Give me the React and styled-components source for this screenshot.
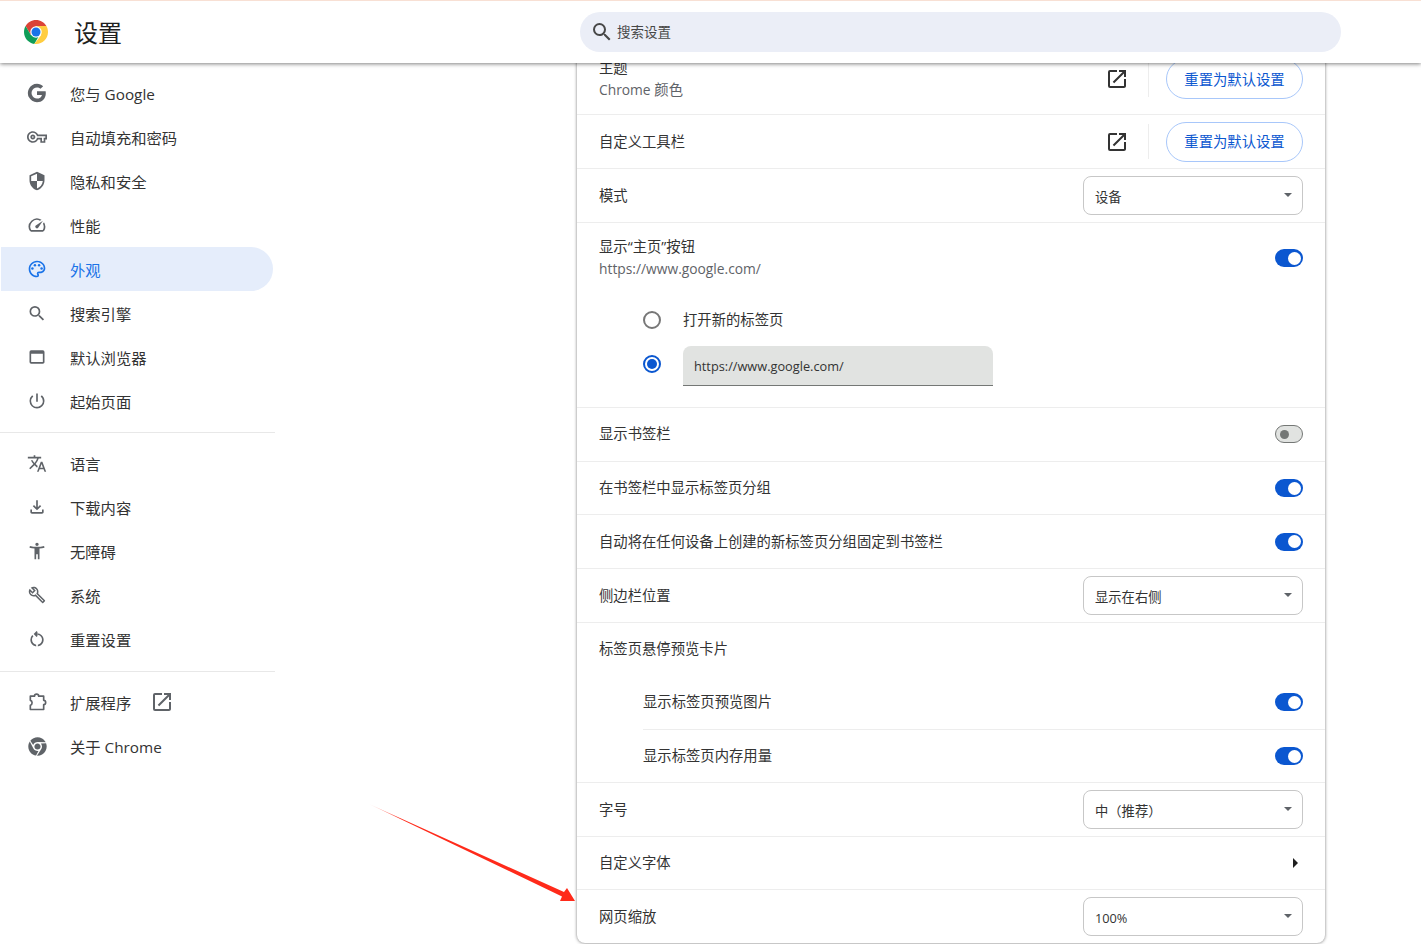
import React from "react";
import styled, { createGlobalStyle } from "styled-components";
import {
  MdOutlineVpnKey, MdSecurity, MdSpeed, MdOutlinePalette, MdSearch, MdWebAsset,
  MdOutlinePowerSettingsNew, MdTranslate, MdOutlineFileDownload, MdAccessibilityNew,
  MdOutlineBuild, MdOutlineRestartAlt, MdOutlineOpenInNew,
} from "react-icons/md";
import { FaChrome } from "react-icons/fa";

const Global = createGlobalStyle`
  html, body { margin: 0; padding: 0; background: #fff; overflow: hidden; }
  body { font-family: "Open Sans", "Noto Sans CJK SC", sans-serif; color: #1f1f1f; }
  * { box-sizing: border-box; }
`;

const Page = styled.div`
  position: relative;
  width: 1421px;
  height: 944px;
  overflow: hidden;
`;
const Header = styled.header`
  position: relative;
  z-index: 2;
  height: 63px;
  background: #fff;
  border-top: 1px solid #f8e0d4;
  box-shadow: 0 1px 4px rgba(0, 0, 0, 0.5);
  display: flex;
  align-items: center;
  padding-bottom: 1px;
`;
const Brand = styled.div`
  width: 580px;
  display: flex;
  align-items: center;
  padding-left: 24px;
  gap: 26px;
`;
const Title = styled.h1`
  margin: 2px 0 0;
  font-size: 24px;
  font-weight: 400;
  line-height: 32px;
  color: #1f1f1f;
`;
const SearchBox = styled.div`
  width: 761px;
  height: 40px;
  background: #ebeef7;
  border-radius: 20px;
  display: flex;
  align-items: center;
  padding-left: 10px;
  gap: 3px;
  font-size: 13.5px;
  color: #474747;
  svg { font-size: 24px; color: #474747; }
`;
const SearchText = styled.span`
  padding-bottom: 2px;
`;
const Body = styled.div`
  display: flex;
  align-items: flex-start;
`;
const Sidebar = styled.nav`
  width: 275px;
  padding-top: 8px;
  flex: none;
`;
const NavItem = styled.div`
  width: 272px;
  height: 44px;
  margin-left: 1px;
  padding-left: 26px;
  display: flex;
  align-items: center;
  gap: 23px;
  font-size: 15.3px;
  color: ${(p) => (p.$active ? "#1a73e8" : "#333")};
  background: ${(p) => (p.$active ? "#e5edfb" : "transparent")};
  border-radius: 0 22px 22px 0;
`;
const NavIcon = styled.span`
  width: 20px;
  height: 20px;
  display: flex;
  align-items: center;
  justify-content: center;
  font-size: ${(p) => p.$size || 20}px;
  color: ${(p) => (p.$active ? "#1a73e8" : "#5f6368")};
`;
const NavDivider = styled.hr`
  margin: ${(p) => p.$top || 9}px 0 8px;
  border: 0;
  border-top: 1px solid #e8e8e8;
`;
const NavExternal = styled.span`
  margin-left: -4px;
  display: flex;
  font-size: 24px;
  color: #5f6368;
`;
const Main = styled.main`
  padding-left: 302px;
  margin-top: -19px;
`;
const Card = styled.section`
  width: 748px;
  height: 899px;
  background: #fff;
  border-radius: 8px;
  box-shadow: 0 0 3px rgba(0, 0, 0, 0.45), 0 1px 4px rgba(0, 0, 0, 0.12);
  font-size: 14.33px;
  color: #333;
`;
const Row = styled.div`
  height: ${(p) => p.$h || 54}px;
  padding: 0 22px ${(p) => (p.$lift ? "1px" : "0")} ${(p) => p.$indent || 22}px;
  display: flex;
  align-items: center;
  justify-content: space-between;
  border-bottom: 1px solid ${(p) => (p.$plain ? "transparent" : "#ededed")};
`;
const SubRow = styled(Row)`
  margin-left: 66px;
  padding-left: 0;
`;
const HomeBlock = styled.div`
  height: 185px;
  border-bottom: 1px solid #ededed;
`;
const HomeHead = styled.div`
  height: 75px;
  padding: 14px 22px 0;
  display: flex;
  justify-content: space-between;
  align-items: flex-start;
`;
const Texts = styled.div`
  display: flex;
  flex-direction: column;
  gap: 2px;
`;
const Label = styled.div`
  line-height: 20px;
`;
const Sub = styled.div`
  line-height: 20px;
  color: #5f6368;
`;
const Latin = styled.span`
  font-size: ${(p) => p.$size || 13.8}px;
`;
const RadioRow = styled.div`
  height: 44px;
  padding-left: 66px;
  display: flex;
  align-items: center;
  gap: 22px;
`;
const Radio = styled.span`
  width: 18px;
  height: 18px;
  border-radius: 50%;
  flex: none;
  border: 2px solid ${(p) => (p.$on ? "#0b57d0" : "#777")};
  display: flex;
  align-items: center;
  justify-content: center;
  &::after {
    content: "";
    width: 10px;
    height: 10px;
    border-radius: 50%;
    background: ${(p) => (p.$on ? "#0b57d0" : "transparent")};
  }
`;
const UrlInput = styled.div`
  width: 310px;
  height: 40px;
  margin-top: 4px;
  padding: 1px 11px 0;
  display: flex;
  align-items: center;
  background: #e1e3e1;
  border-radius: 8px 8px 0 0;
  border-bottom: 1px solid #747775;
  font-size: 12.75px;
  color: #333;
`;
const Toggle = styled.span`
  width: 28px;
  height: 18px;
  margin-top: ${(p) => p.$top || 0}px;
  border-radius: 9px;
  display: flex;
  flex: none;
  align-items: center;
  padding: 0 ${(p) => (p.$on ? "2px" : "4px")};
  justify-content: ${(p) => (p.$on ? "flex-end" : "flex-start")};
  background: ${(p) => (p.$on ? "#0b57d0" : "#e1e3e1")};
  border: ${(p) => (p.$on ? "0" : "1px solid #747775")};
  &::after {
    content: "";
    width: ${(p) => (p.$on ? 13 : 9)}px;
    height: ${(p) => (p.$on ? 13 : 9)}px;
    border-radius: 50%;
    background: ${(p) => (p.$on ? "#fff" : "#747775")};
  }
`;
const Select = styled.div`
  width: 220px;
  height: 39px;
  border: 1px solid #c7c7c7;
  border-radius: 8px;
  padding: 2px 10px 0 11px;
  display: flex;
  align-items: center;
  justify-content: space-between;
  font-size: 13.3px;
  color: #333;
  &::after {
    content: "";
    margin-top: -3px;
    border-left: 4px solid transparent;
    border-right: 4px solid transparent;
    border-top: 4px solid #5f6368;
  }
`;
const Actions = styled.div`
  display: flex;
  align-items: center;
`;
const External = styled.span`
  height: 34px;
  margin-right: 19px;
  display: flex;
  align-items: center;
  font-size: 24px;
  color: #333;
`;
const Sep = styled.span`
  width: 1px;
  height: 35px;
  margin-right: 17px;
  background: #ededed;
`;
const PillButton = styled.button`
  width: 137px;
  height: 40px;
  padding: 0 0 2px;
  border: 1px solid #a8c7fa;
  border-radius: 20px;
  background: #fff;
  color: #0b57d0;
  font: inherit;
  font-size: 14.33px;
`;
const Caret = styled.span`
  margin-right: 5px;
  border-top: 5px solid transparent;
  border-bottom: 5px solid transparent;
  border-left: 5px solid #1f1f1f;
`;
const Annotation = styled.svg`
  position: absolute;
  left: 360px;
  top: 795px;
  z-index: 3;
`;

const GoogleG = () => (
  <svg width="20" height="20" viewBox="0 0 24 24" fill="currentColor">
    <path d="M22.56 12.25c0-.78-.07-1.53-.2-2.25H12v4.26h5.92c-.26 1.37-1.04 2.53-2.21 3.31v2.77h3.57c2.08-1.92 3.28-4.74 3.28-8.09z" />
    <path d="M12 23c2.97 0 5.46-.98 7.28-2.66l-3.57-2.77c-.98.66-2.23 1.06-3.71 1.06-2.86 0-5.29-1.93-6.16-4.53H2.18v2.84C3.99 20.53 7.7 23 12 23z" />
    <path d="M5.84 14.09c-.22-.66-.35-1.36-.35-2.09s.13-1.43.35-2.09V7.07H2.18C1.43 8.55 1 10.22 1 12s.43 3.45 1.18 4.93l2.85-2.22.81-.62z" />
    <path d="M12 5.38c1.62 0 3.06.56 4.21 1.64l3.15-3.15C17.45 2.09 14.97 1 12 1 7.7 1 3.99 3.47 2.18 7.07l3.66 2.84c.87-2.6 3.3-4.53 6.16-4.53z" />
  </svg>
);

const ExtensionIcon = () => (
  <svg width="22" height="22" viewBox="0 0 24 24" fill="none" stroke="currentColor" strokeWidth="2" strokeLinejoin="round">
    <path d="M4 5h5c0-3.200 5-3.200 5 0h6v5c3.200 0 3.200 5 0 5v6H4v-5c2.800-.6 2.800-5.400 0-6z" />
  </svg>
);

const ChromeLogo = () => (
  <svg width="24" height="24" viewBox="0 0 48 48">
    <path fill="#db4437" d="M24 0C15.100 0 7.400 4.800 3.200 12l10.400 18L24 12h20.800C40.600 4.800 32.900 0 24 0z" />
    <path fill="#0f9d58" d="M3.200 12C1.200 15.500 0 19.600 0 24c0 12.100 9 22.100 20.600 23.800L31 30 13.600 30 3.200 12z" />
    <path fill="#ffcd40" d="M24 12l20.800 0C46.800 15.500 48 19.600 48 24c0 13.300-10.700 24-24 24-1.100 0-2.300-.1-3.400-.2L34.400 30 24 12z" />
    <circle cx="24" cy="24" r="11.500" fill="#fff" />
    <circle cx="24" cy="24" r="9" fill="#1a73e8" />
  </svg>
);

const group1 = [
  [<GoogleG />, "您与 Google"],
  [<MdOutlineVpnKey />, "自动填充和密码", 22],
  [<MdSecurity />, "隐私和安全"],
  [<MdSpeed />, "性能", 22],
  [<MdOutlinePalette />, "外观", 20, true],
  [<MdSearch />, "搜索引擎", 21],
  [<MdWebAsset />, "默认浏览器", 24],
  [<MdOutlinePowerSettingsNew />, "起始页面"],
];
const group2 = [
  [<MdTranslate />, "语言", 25],
  [<MdOutlineFileDownload />, "下载内容"],
  [<MdAccessibilityNew />, "无障碍", 22],
  [<MdOutlineBuild />, "系统", 18],
  [<MdOutlineRestartAlt />, "重置设置", 20],
];

const Item = ({ icon, label, size, active, children }) => (
  <NavItem $active={active}>
    <NavIcon $size={size} $active={active}>{icon}</NavIcon>
    <span>{label}</span>
    {children}
  </NavItem>
);

export default function App() {
  return (
    <Page>
      <Global />
      <Header>
        <Brand>
          <ChromeLogo />
          <Title>设置</Title>
        </Brand>
        <SearchBox>
          <MdSearch />
          <SearchText>搜索设置</SearchText>
        </SearchBox>
      </Header>
      <Body>
        <Sidebar>
          {group1.map(([icon, label, size, active]) => (
            <Item key={label} icon={icon} label={label} size={size} active={active} />
          ))}
          <NavDivider />
          {group2.map(([icon, label, size]) => (
            <Item key={label} icon={icon} label={label} size={size} />
          ))}
          <NavDivider $top={10} />
          <Item icon={<ExtensionIcon />} label="扩展程序">
            <NavExternal><MdOutlineOpenInNew /></NavExternal>
          </Item>
          <Item icon={<FaChrome />} label="关于 Chrome" size={19} />
        </Sidebar>
        <Main>
          <Card>
            <Row $h={71}>
              <Texts>
                <Label>主题</Label>
                <Sub><Latin>Chrome</Latin> 颜色</Sub>
              </Texts>
              <Actions>
                <External><MdOutlineOpenInNew /></External>
                <Sep />
                <PillButton>重置为默认设置</PillButton>
              </Actions>
            </Row>
            <Row>
              <Label>自定义工具栏</Label>
              <Actions>
                <External><MdOutlineOpenInNew /></External>
                <Sep />
                <PillButton>重置为默认设置</PillButton>
              </Actions>
            </Row>
            <Row>
              <Label>模式</Label>
              <Select>设备</Select>
            </Row>
            <HomeBlock>
              <HomeHead>
                <Texts>
                  <Label>显示“主页”按钮</Label>
                  <Sub><Latin>https://www.google.com/</Latin></Sub>
                </Texts>
                <Toggle $on $top={12} />
              </HomeHead>
              <RadioRow>
                <Radio />
                <Label>打开新的标签页</Label>
              </RadioRow>
              <RadioRow>
                <Radio $on />
                <UrlInput>https://www.google.com/</UrlInput>
              </RadioRow>
            </HomeBlock>
            <Row $lift>
              <Label>显示书签栏</Label>
              <Toggle />
            </Row>
            <Row $h={53}>
              <Label>在书签栏中显示标签页分组</Label>
              <Toggle $on />
            </Row>
            <Row>
              <Label>自动将在任何设备上创建的新标签页分组固定到书签栏</Label>
              <Toggle $on />
            </Row>
            <Row>
              <Label>侧边栏位置</Label>
              <Select>显示在右侧</Select>
            </Row>
            <Row $h={53} $plain>
              <Label>标签页悬停预览卡片</Label>
            </Row>
            <SubRow $lift>
              <Label>显示标签页预览图片</Label>
              <Toggle $on />
            </SubRow>
            <Row $h={53} $indent={66}>
              <Label>显示标签页内存用量</Label>
              <Toggle $on />
            </Row>
            <Row>
              <Label>字号</Label>
              <Select>中（推荐）</Select>
            </Row>
            <Row $h={53}>
              <Label>自定义字体</Label>
              <Caret />
            </Row>
            <Row $plain>
              <Label>网页缩放</Label>
              <Select><Latin $size={12.75}>100%</Latin></Select>
            </Row>
          </Card>
        </Main>
      </Body>
      <Annotation width="230" height="120" viewBox="360 795 230 120">
        <defs>
          <linearGradient id="tail" x1="370" y1="804" x2="574" y2="901" gradientUnits="userSpaceOnUse">
            <stop offset="0" stopColor="#ff2a1a" stopOpacity="0.2" />
            <stop offset="0.15" stopColor="#ff2a1a" />
            <stop offset="1" stopColor="#ff2a1a" />
          </linearGradient>
        </defs>
        <polygon fill="url(#tail)" points="369,804 564,892 567,888 575,901 560,901 562,896.500" />
      </Annotation>
    </Page>
  );
}
